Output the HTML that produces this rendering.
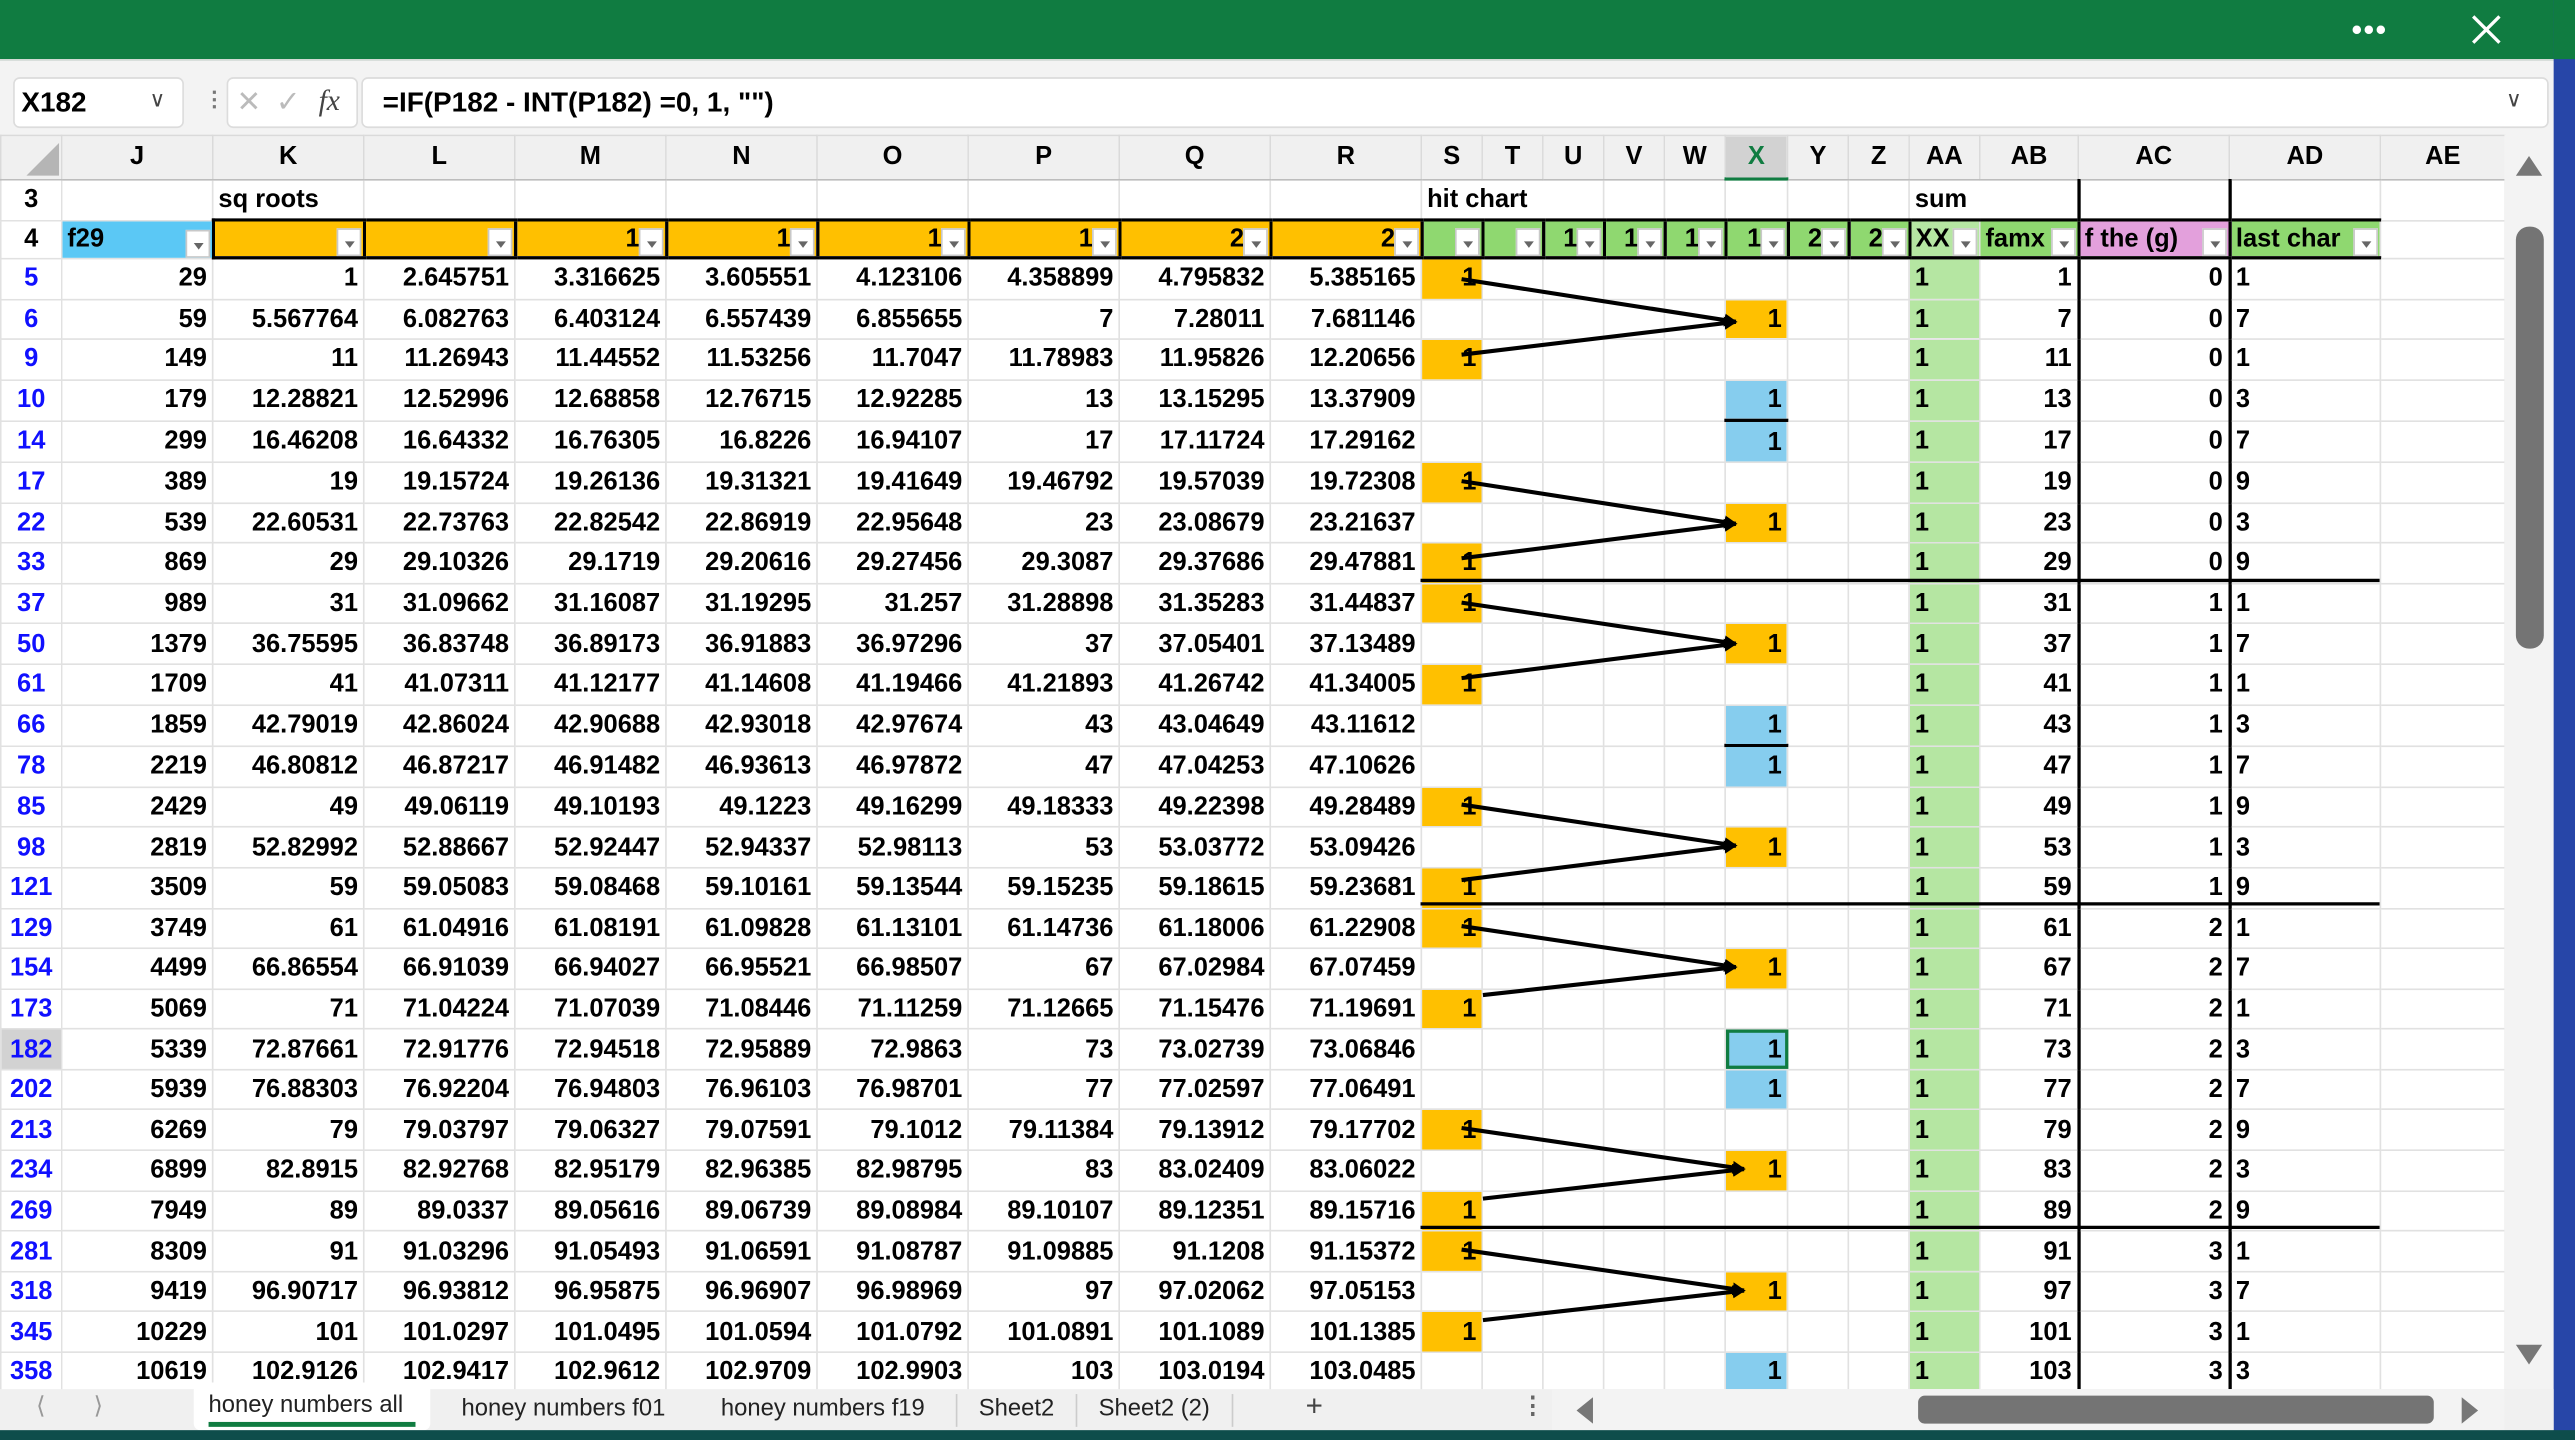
<!DOCTYPE html>
<html><head><meta charset="utf-8"><style>
html,body{margin:0;padding:0;width:2575px;height:1440px;overflow:hidden;background:#fff}
#r{position:absolute;left:0;top:0;width:1568px;height:877px;transform-origin:0 0;transform:scale(1.64222,1.64196);font-family:"Liberation Sans",Arial,sans-serif;background:#f3f3f3;overflow:hidden}
.abs{position:absolute}
#title{left:0;top:0;width:1568px;height:36px;background:#107c41}
#fbar{left:0;top:36px;width:1568px;height:46px;background:#f3f3f3;border-top:1px solid #cfd8d3}
.box{position:absolute;background:#fff;border:1px solid #dcdcdc;border-radius:4px}
table{border-collapse:collapse;table-layout:fixed;position:absolute;left:0;top:82px;background:#fff}
td{border:1px solid #e1e1e1;padding:0 3px;font-weight:bold;font-size:15.5px;white-space:nowrap;overflow:hidden;text-align:right;height:23.6px;line-height:23px;position:relative;color:#000}
tr.ch td{background:#f0f0f0;text-align:center;height:25px;border-color:#dadada;border-bottom:1px solid #bdbdbd}
td.rh{text-align:center;color:#1010ff;padding:0;background:#fff}
tr.h3 td{height:23px;text-align:left}
tr.h4 td{height:21px;line-height:21px;text-align:right;border-top:2px solid #000;border-bottom:2px solid #000}
tr.h4 td.l{text-align:left}
.o{background:#ffc000}.g{background:#8fd870}.lg{background:#b5e6a2}.b{background:#86cdee}.p{background:#e3a0dc}.bl{background:#5bc8f5}
.fb{position:absolute;right:1px;bottom:0px;width:15px;height:17px;background:#fff;border:1px solid #c8c8c8;box-sizing:border-box}
.fb:after{content:"";position:absolute;left:4px;top:7px;border-left:3px solid transparent;border-right:3px solid transparent;border-top:4px solid #666}
td.l{text-align:left}
.vl{border-left:2px solid #000 !important}
</style></head><body><div id="r">
<div id="title" class="abs">
<div class="abs" style="left:1432px;top:8px;color:#fff;font-size:18px;letter-spacing:1px;font-weight:bold">•••</div>
<svg class="abs" style="left:1503px;top:7px" width="22" height="22"><path d="M3 3L19 19M19 3L3 19" stroke="#fff" stroke-width="2"/></svg>
</div>
<div id="fbar" class="abs">
<div class="box" style="left:8px;top:10px;width:102px;height:29px"><span class="abs" style="left:4px;top:5px;font-weight:bold;font-size:17px">X182</span><span class="abs" style="left:82px;top:5px;font-size:13px;color:#444">&#8744;</span></div>
<div class="abs" style="left:124px;top:16px;color:#777;font-size:13px;font-weight:bold">&#8942;</div>
<div class="box" style="left:138px;top:10px;width:78px;height:29px"><span class="abs" style="left:5px;top:4px;color:#bbb;font-size:18px">&#10005;</span><span class="abs" style="left:29px;top:4px;color:#bbb;font-size:18px">&#10003;</span><span class="abs" style="left:55px;top:3px;color:#444;font-size:18px;font-style:italic;font-family:'Liberation Serif',serif">fx</span></div>
<div class="box" style="left:220px;top:10px;width:1330px;height:29px"><span class="abs" style="left:12px;top:5px;font-weight:bold;font-size:17px">=IF(P182 - INT(P182) =0, 1, "")</span><span class="abs" style="left:1305px;top:5px;font-size:13px;color:#444">&#8744;</span></div>
</div>
<table>
<colgroup><col style="width:37px"><col style="width:92px"><col style="width:92px"><col style="width:92px"><col style="width:92px"><col style="width:92px"><col style="width:92px"><col style="width:92px"><col style="width:92px"><col style="width:92px"><col style="width:37px"><col style="width:37px"><col style="width:37px"><col style="width:37px"><col style="width:37px"><col style="width:38px"><col style="width:37px"><col style="width:37px"><col style="width:43px"><col style="width:60px"><col style="width:92px"><col style="width:92px"><col style="width:76px"></colgroup>
<tr class="ch"><td style="position:relative"><svg class="abs" style="left:15px;top:4px" width="20" height="20"><path d="M20 0V20H0Z" fill="#b5b5b5"/></svg></td><td>J</td><td>K</td><td>L</td><td>M</td><td>N</td><td>O</td><td>P</td><td>Q</td><td>R</td><td>S</td><td>T</td><td>U</td><td>V</td><td>W</td><td style="background:#d2d2d2;color:#107c41;border-bottom:2px solid #107c41">X</td><td>Y</td><td>Z</td><td>AA</td><td>AB</td><td>AC</td><td>AD</td><td>AE</td></tr>
<tr class="h3"><td class="rh" style="color:#000;text-align:center">3</td><td></td><td>sq roots</td><td></td><td></td><td></td><td></td><td></td><td></td><td></td><td colspan="3">hit chart</td><td></td><td></td><td></td><td></td><td></td><td colspan="2">sum</td><td class="vl"></td><td class="vl"></td><td></td></tr>
<tr class="h4"><td class="rh" style="color:#000;border-top:1px solid #e1e1e1;border-bottom:1px solid #e1e1e1;text-align:center">4</td><td class="bl l" style="border-top:1px solid #e1e1e1;border-bottom:1px solid #e1e1e1">f29<span class="fb"></span></td><td class="o" style="border-left:2px solid #000"><span class="fb"></span></td><td class="o" style="border-left:2px solid #000"><span class="fb"></span></td><td class="o" style="border-left:2px solid #000;padding-right:15px">1<span class="fb"></span></td><td class="o" style="border-left:2px solid #000;padding-right:15px">1<span class="fb"></span></td><td class="o" style="border-left:2px solid #000;padding-right:15px">1<span class="fb"></span></td><td class="o" style="border-left:2px solid #000;padding-right:15px">1<span class="fb"></span></td><td class="o" style="border-left:2px solid #000;padding-right:15px">2<span class="fb"></span></td><td class="o" style="border-left:2px solid #000;padding-right:15px">2<span class="fb"></span></td><td class="g" style="border-left:2px solid #000"><span class="fb"></span></td><td class="g" style="border-left:2px solid #000"><span class="fb"></span></td><td class="g" style="border-left:2px solid #000;padding-right:15px">1<span class="fb"></span></td><td class="g" style="border-left:2px solid #000;padding-right:15px">1<span class="fb"></span></td><td class="g" style="border-left:2px solid #000;padding-right:15px">1<span class="fb"></span></td><td class="g" style="border-left:2px solid #000;padding-right:15px">1<span class="fb"></span></td><td class="g" style="border-left:2px solid #000;padding-right:15px">2<span class="fb"></span></td><td class="g" style="border-left:2px solid #000;padding-right:15px">2<span class="fb"></span></td><td class="lg l" style="border-left:2px solid #000">XX<span class="fb"></span></td><td class="g l">famx<span class="fb"></span></td><td class="p l vl">f the (g)<span class="fb"></span></td><td class="g l vl">last char<span class="fb"></span></td><td style="border-top:1px solid #e1e1e1;border-bottom:1px solid #e1e1e1"></td></tr>
<tr><td class="rh">5</td><td>29</td><td>1</td><td>2.645751</td><td>3.316625</td><td>3.605551</td><td>4.123106</td><td>4.358899</td><td>4.795832</td><td>5.385165</td><td class="o">1</td><td></td><td></td><td></td><td></td><td></td><td></td><td></td><td class="lg l">1</td><td>1</td><td class="vl">0</td><td class="l vl">1</td><td></td></tr>
<tr><td class="rh">6</td><td>59</td><td>5.567764</td><td>6.082763</td><td>6.403124</td><td>6.557439</td><td>6.855655</td><td>7</td><td>7.28011</td><td>7.681146</td><td></td><td></td><td></td><td></td><td></td><td class="o">1</td><td></td><td></td><td class="lg l">1</td><td>7</td><td class="vl">0</td><td class="l vl">7</td><td></td></tr>
<tr><td class="rh">9</td><td>149</td><td>11</td><td>11.26943</td><td>11.44552</td><td>11.53256</td><td>11.7047</td><td>11.78983</td><td>11.95826</td><td>12.20656</td><td class="o">1</td><td></td><td></td><td></td><td></td><td></td><td></td><td></td><td class="lg l">1</td><td>11</td><td class="vl">0</td><td class="l vl">1</td><td></td></tr>
<tr><td class="rh">10</td><td>179</td><td>12.28821</td><td>12.52996</td><td>12.68858</td><td>12.76715</td><td>12.92285</td><td>13</td><td>13.15295</td><td>13.37909</td><td></td><td></td><td></td><td></td><td></td><td class="b" style="border-bottom:2px solid #000">1</td><td></td><td></td><td class="lg l">1</td><td>13</td><td class="vl">0</td><td class="l vl">3</td><td></td></tr>
<tr><td class="rh">14</td><td>299</td><td>16.46208</td><td>16.64332</td><td>16.76305</td><td>16.8226</td><td>16.94107</td><td>17</td><td>17.11724</td><td>17.29162</td><td></td><td></td><td></td><td></td><td></td><td class="b">1</td><td></td><td></td><td class="lg l">1</td><td>17</td><td class="vl">0</td><td class="l vl">7</td><td></td></tr>
<tr><td class="rh">17</td><td>389</td><td>19</td><td>19.15724</td><td>19.26136</td><td>19.31321</td><td>19.41649</td><td>19.46792</td><td>19.57039</td><td>19.72308</td><td class="o">1</td><td></td><td></td><td></td><td></td><td></td><td></td><td></td><td class="lg l">1</td><td>19</td><td class="vl">0</td><td class="l vl">9</td><td></td></tr>
<tr><td class="rh">22</td><td>539</td><td>22.60531</td><td>22.73763</td><td>22.82542</td><td>22.86919</td><td>22.95648</td><td>23</td><td>23.08679</td><td>23.21637</td><td></td><td></td><td></td><td></td><td></td><td class="o">1</td><td></td><td></td><td class="lg l">1</td><td>23</td><td class="vl">0</td><td class="l vl">3</td><td></td></tr>
<tr><td class="rh">33</td><td>869</td><td>29</td><td>29.10326</td><td>29.1719</td><td>29.20616</td><td>29.27456</td><td>29.3087</td><td>29.37686</td><td>29.47881</td><td class="o">1</td><td></td><td></td><td></td><td></td><td></td><td></td><td></td><td class="lg l">1</td><td>29</td><td class="vl">0</td><td class="l vl">9</td><td></td></tr>
<tr><td class="rh">37</td><td>989</td><td>31</td><td>31.09662</td><td>31.16087</td><td>31.19295</td><td>31.257</td><td>31.28898</td><td>31.35283</td><td>31.44837</td><td class="o">1</td><td></td><td></td><td></td><td></td><td></td><td></td><td></td><td class="lg l">1</td><td>31</td><td class="vl">1</td><td class="l vl">1</td><td></td></tr>
<tr><td class="rh">50</td><td>1379</td><td>36.75595</td><td>36.83748</td><td>36.89173</td><td>36.91883</td><td>36.97296</td><td>37</td><td>37.05401</td><td>37.13489</td><td></td><td></td><td></td><td></td><td></td><td class="o">1</td><td></td><td></td><td class="lg l">1</td><td>37</td><td class="vl">1</td><td class="l vl">7</td><td></td></tr>
<tr><td class="rh">61</td><td>1709</td><td>41</td><td>41.07311</td><td>41.12177</td><td>41.14608</td><td>41.19466</td><td>41.21893</td><td>41.26742</td><td>41.34005</td><td class="o">1</td><td></td><td></td><td></td><td></td><td></td><td></td><td></td><td class="lg l">1</td><td>41</td><td class="vl">1</td><td class="l vl">1</td><td></td></tr>
<tr><td class="rh">66</td><td>1859</td><td>42.79019</td><td>42.86024</td><td>42.90688</td><td>42.93018</td><td>42.97674</td><td>43</td><td>43.04649</td><td>43.11612</td><td></td><td></td><td></td><td></td><td></td><td class="b" style="border-bottom:2px solid #000">1</td><td></td><td></td><td class="lg l">1</td><td>43</td><td class="vl">1</td><td class="l vl">3</td><td></td></tr>
<tr><td class="rh">78</td><td>2219</td><td>46.80812</td><td>46.87217</td><td>46.91482</td><td>46.93613</td><td>46.97872</td><td>47</td><td>47.04253</td><td>47.10626</td><td></td><td></td><td></td><td></td><td></td><td class="b">1</td><td></td><td></td><td class="lg l">1</td><td>47</td><td class="vl">1</td><td class="l vl">7</td><td></td></tr>
<tr><td class="rh">85</td><td>2429</td><td>49</td><td>49.06119</td><td>49.10193</td><td>49.1223</td><td>49.16299</td><td>49.18333</td><td>49.22398</td><td>49.28489</td><td class="o">1</td><td></td><td></td><td></td><td></td><td></td><td></td><td></td><td class="lg l">1</td><td>49</td><td class="vl">1</td><td class="l vl">9</td><td></td></tr>
<tr><td class="rh">98</td><td>2819</td><td>52.82992</td><td>52.88667</td><td>52.92447</td><td>52.94337</td><td>52.98113</td><td>53</td><td>53.03772</td><td>53.09426</td><td></td><td></td><td></td><td></td><td></td><td class="o">1</td><td></td><td></td><td class="lg l">1</td><td>53</td><td class="vl">1</td><td class="l vl">3</td><td></td></tr>
<tr><td class="rh">121</td><td>3509</td><td>59</td><td>59.05083</td><td>59.08468</td><td>59.10161</td><td>59.13544</td><td>59.15235</td><td>59.18615</td><td>59.23681</td><td class="o">1</td><td></td><td></td><td></td><td></td><td></td><td></td><td></td><td class="lg l">1</td><td>59</td><td class="vl">1</td><td class="l vl">9</td><td></td></tr>
<tr><td class="rh">129</td><td>3749</td><td>61</td><td>61.04916</td><td>61.08191</td><td>61.09828</td><td>61.13101</td><td>61.14736</td><td>61.18006</td><td>61.22908</td><td class="o">1</td><td></td><td></td><td></td><td></td><td></td><td></td><td></td><td class="lg l">1</td><td>61</td><td class="vl">2</td><td class="l vl">1</td><td></td></tr>
<tr><td class="rh">154</td><td>4499</td><td>66.86554</td><td>66.91039</td><td>66.94027</td><td>66.95521</td><td>66.98507</td><td>67</td><td>67.02984</td><td>67.07459</td><td></td><td></td><td></td><td></td><td></td><td class="o">1</td><td></td><td></td><td class="lg l">1</td><td>67</td><td class="vl">2</td><td class="l vl">7</td><td></td></tr>
<tr><td class="rh">173</td><td>5069</td><td>71</td><td>71.04224</td><td>71.07039</td><td>71.08446</td><td>71.11259</td><td>71.12665</td><td>71.15476</td><td>71.19691</td><td class="o">1</td><td></td><td></td><td></td><td></td><td></td><td></td><td></td><td class="lg l">1</td><td>71</td><td class="vl">2</td><td class="l vl">1</td><td></td></tr>
<tr><td class="rh" style="background:#d2d2d2">182</td><td>5339</td><td>72.87661</td><td>72.91776</td><td>72.94518</td><td>72.95889</td><td>72.9863</td><td>73</td><td>73.02739</td><td>73.06846</td><td></td><td></td><td></td><td></td><td></td><td class="b" style="outline:2px solid #107c41;outline-offset:-2px">1</td><td></td><td></td><td class="lg l">1</td><td>73</td><td class="vl">2</td><td class="l vl">3</td><td></td></tr>
<tr><td class="rh">202</td><td>5939</td><td>76.88303</td><td>76.92204</td><td>76.94803</td><td>76.96103</td><td>76.98701</td><td>77</td><td>77.02597</td><td>77.06491</td><td></td><td></td><td></td><td></td><td></td><td class="b">1</td><td></td><td></td><td class="lg l">1</td><td>77</td><td class="vl">2</td><td class="l vl">7</td><td></td></tr>
<tr><td class="rh">213</td><td>6269</td><td>79</td><td>79.03797</td><td>79.06327</td><td>79.07591</td><td>79.1012</td><td>79.11384</td><td>79.13912</td><td>79.17702</td><td class="o">1</td><td></td><td></td><td></td><td></td><td></td><td></td><td></td><td class="lg l">1</td><td>79</td><td class="vl">2</td><td class="l vl">9</td><td></td></tr>
<tr><td class="rh">234</td><td>6899</td><td>82.8915</td><td>82.92768</td><td>82.95179</td><td>82.96385</td><td>82.98795</td><td>83</td><td>83.02409</td><td>83.06022</td><td></td><td></td><td></td><td></td><td></td><td class="o">1</td><td></td><td></td><td class="lg l">1</td><td>83</td><td class="vl">2</td><td class="l vl">3</td><td></td></tr>
<tr><td class="rh">269</td><td>7949</td><td>89</td><td>89.0337</td><td>89.05616</td><td>89.06739</td><td>89.08984</td><td>89.10107</td><td>89.12351</td><td>89.15716</td><td class="o">1</td><td></td><td></td><td></td><td></td><td></td><td></td><td></td><td class="lg l">1</td><td>89</td><td class="vl">2</td><td class="l vl">9</td><td></td></tr>
<tr><td class="rh">281</td><td>8309</td><td>91</td><td>91.03296</td><td>91.05493</td><td>91.06591</td><td>91.08787</td><td>91.09885</td><td>91.1208</td><td>91.15372</td><td class="o">1</td><td></td><td></td><td></td><td></td><td></td><td></td><td></td><td class="lg l">1</td><td>91</td><td class="vl">3</td><td class="l vl">1</td><td></td></tr>
<tr><td class="rh">318</td><td>9419</td><td>96.90717</td><td>96.93812</td><td>96.95875</td><td>96.96907</td><td>96.98969</td><td>97</td><td>97.02062</td><td>97.05153</td><td></td><td></td><td></td><td></td><td></td><td class="o">1</td><td></td><td></td><td class="lg l">1</td><td>97</td><td class="vl">3</td><td class="l vl">7</td><td></td></tr>
<tr><td class="rh">345</td><td>10229</td><td>101</td><td>101.0297</td><td>101.0495</td><td>101.0594</td><td>101.0792</td><td>101.0891</td><td>101.1089</td><td>101.1385</td><td class="o">1</td><td></td><td></td><td></td><td></td><td></td><td></td><td></td><td class="lg l">1</td><td>101</td><td class="vl">3</td><td class="l vl">1</td><td></td></tr>
<tr><td class="rh">358</td><td>10619</td><td>102.9126</td><td>102.9417</td><td>102.9612</td><td>102.9709</td><td>102.9903</td><td>103</td><td>103.0194</td><td>103.0485</td><td></td><td></td><td></td><td></td><td></td><td class="b">1</td><td></td><td></td><td class="lg l">1</td><td>103</td><td class="vl">3</td><td class="l vl">3</td><td></td></tr>
</table>
<svg class="abs" style="left:0;top:0" width="1568" height="877">
<defs><marker id="a" markerWidth="8" markerHeight="8" refX="7" refY="4" orient="auto" markerUnits="userSpaceOnUse"><path d="M0 0L8 4L0 8Z" fill="#000"/></marker></defs>
<g stroke="#000" stroke-width="2.5" fill="none" marker-end="url(#a)">
<line x1="890" y1="170" x2="1057" y2="196"/><line x1="890" y1="216" x2="1057" y2="196"/>
<line x1="890" y1="293" x2="1057" y2="319"/><line x1="890" y1="340" x2="1057" y2="319"/>
<line x1="890" y1="367" x2="1057" y2="392"/><line x1="890" y1="413" x2="1057" y2="392"/>
<line x1="890" y1="490" x2="1057" y2="515"/><line x1="890" y1="536" x2="1057" y2="515"/>
<line x1="890" y1="564" x2="1057" y2="589"/><line x1="903" y1="606" x2="1057" y2="589"/>
<line x1="890" y1="687" x2="1062" y2="712"/><line x1="903" y1="730" x2="1062" y2="712"/>
<line x1="890" y1="761" x2="1062" y2="786"/><line x1="903" y1="804" x2="1062" y2="786"/>
</g>
<g stroke="#000" stroke-width="2"><line x1="865" y1="353.5" x2="1449" y2="353.5"/><line x1="865" y1="550.5" x2="1449" y2="550.5"/><line x1="865" y1="747.5" x2="1449" y2="747.5"/></g>
</svg>
<div class="abs" style="left:1525px;top:82px;width:30px;height:764px;background:#f3f3f3"></div>
<svg class="abs" style="left:1530px;top:93px" width="20" height="16"><path d="M10 2L18 14H2Z" fill="#777"/></svg>
<div class="abs" style="left:1532px;top:138px;width:17px;height:257px;background:#747474;border-radius:8px"></div>
<svg class="abs" style="left:1530px;top:817px" width="20" height="16"><path d="M10 14L18 2H2Z" fill="#777"/></svg>
<div class="abs" style="left:1555px;top:0;width:13px;height:877px;background:#2746a8"></div>
<div class="abs" style="left:1555px;top:0;width:13px;height:36px;background:#107c41"></div>
<div class="abs" style="left:0;top:846px;width:1555px;height:25px;background:#f0f0f0;font-size:14.5px;color:#222">
<span class="abs" style="left:22px;top:3px;color:#999">&#10216;</span><span class="abs" style="left:57px;top:3px;color:#999">&#10217;</span>
<div class="abs" style="left:118px;top:-4px;width:144px;height:29px;background:#fff;border-radius:0 0 4px 4px"></div>
<span class="abs" style="left:127px;top:2px">honey numbers all</span>
<div class="abs" style="left:127px;top:20px;width:126px;height:3px;background:#107c41"></div>
<span class="abs" style="left:281px;top:4px">honey numbers f01</span>
<span class="abs" style="left:439px;top:4px">honey numbers f19</span>
<div class="abs" style="left:582px;top:3px;width:1px;height:20px;background:#ccc"></div>
<span class="abs" style="left:596px;top:4px">Sheet2</span>
<div class="abs" style="left:655px;top:3px;width:1px;height:20px;background:#ccc"></div>
<span class="abs" style="left:669px;top:4px">Sheet2 (2)</span>
<div class="abs" style="left:750px;top:3px;width:1px;height:20px;background:#ccc"></div>
<span class="abs" style="left:795px;top:0px;font-size:18px;color:#444">+</span>
<span class="abs" style="left:926px;top:3px;color:#666;font-weight:bold">&#8942;</span>
<div class="abs" style="left:945px;top:0;width:580px;height:25px;background:#f3f3f3"></div>
<svg class="abs" style="left:958px;top:4px" width="14" height="18"><path d="M12 1V17L2 9Z" fill="#777"/></svg>
<div class="abs" style="left:1168px;top:4px;width:314px;height:17px;background:#747474;border-radius:4px"></div>
<svg class="abs" style="left:1497px;top:4px" width="14" height="18"><path d="M2 1V17L12 9Z" fill="#777"/></svg>
</div>
<div class="abs" style="left:0;top:871px;width:1568px;height:6px;background:#0e4d4b"></div>
</div></body></html>
